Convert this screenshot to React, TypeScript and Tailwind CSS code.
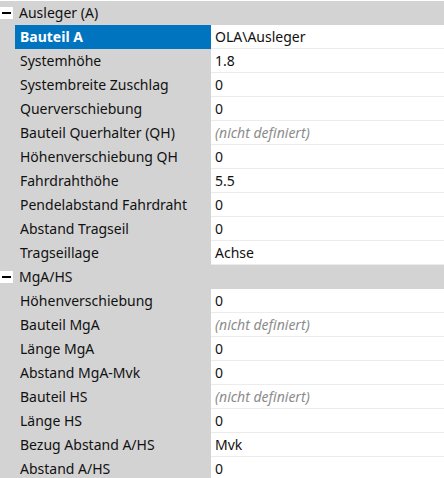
import React from "react";

type Row =
  | { kind: "group"; title: string }
  | { kind: "prop"; label: string; value: string; selected?: boolean; empty?: boolean };

const rows: Row[] = [
  { kind: "group", title: "Ausleger (A)" },
  { kind: "prop", label: "Bauteil A", value: "OLA\\Ausleger", selected: true },
  { kind: "prop", label: "Systemhöhe", value: "1.8" },
  { kind: "prop", label: "Systembreite Zuschlag", value: "0" },
  { kind: "prop", label: "Querverschiebung", value: "0" },
  { kind: "prop", label: "Bauteil Querhalter (QH)", value: "(nicht definiert)", empty: true },
  { kind: "prop", label: "Höhenverschiebung QH", value: "0" },
  { kind: "prop", label: "Fahrdrahthöhe", value: "5.5" },
  { kind: "prop", label: "Pendelabstand Fahrdraht", value: "0" },
  { kind: "prop", label: "Abstand Tragseil", value: "0" },
  { kind: "prop", label: "Tragseillage", value: "Achse" },
  { kind: "group", title: "MgA/HS" },
  { kind: "prop", label: "Höhenverschiebung", value: "0" },
  { kind: "prop", label: "Bauteil MgA", value: "(nicht definiert)", empty: true },
  { kind: "prop", label: "Länge MgA", value: "0" },
  { kind: "prop", label: "Abstand MgA-Mvk", value: "0" },
  { kind: "prop", label: "Bauteil HS", value: "(nicht definiert)", empty: true },
  { kind: "prop", label: "Länge HS", value: "0" },
  { kind: "prop", label: "Bezug Abstand A/HS", value: "Mvk" },
  { kind: "prop", label: "Abstand A/HS", value: "0" },
];

function GroupRow({ title }: { title: string }) {
  return (
    <div className="flex h-[24px] items-center bg-[#d3d3d3]">
      {/* collapse toggle */}
      <div className="w-[15px] h-full flex items-center">
        <div className="w-[13px] h-[12px] bg-white flex items-center justify-center">
          <div className="w-[9px] h-[2px] bg-black" />
        </div>
      </div>
      <span className="pl-[4px] text-[#111]">{title}</span>
    </div>
  );
}

function PropRow({ row }: { row: Extract<Row, { kind: "prop" }> }) {
  return (
    <div className="flex h-[24px] bg-[#d3d3d3]">
      <div className="w-[15px] shrink-0" />
      <div
        className={
          row.selected
            ? "w-[196px] shrink-0 flex items-center pl-[5px] bg-[#0074bf] text-white font-bold"
            : "w-[196px] shrink-0 flex items-center pl-[5px] text-[#111]"
        }
      >
        {row.label}
      </div>
      <div className="flex-1 flex items-center pl-[4px] bg-white border-b border-[#ececec]">
        {row.empty ? <span className="italic text-[#8c8c8c]">{row.value}</span> : <span className="text-[#111]">{row.value}</span>}
      </div>
    </div>
  );
}

export default function App() {
  return (
    <div className="w-[444px] h-[478px] overflow-hidden bg-white pt-[1px] text-[14px] leading-none font-['Segoe_UI','Noto_Sans',sans-serif]">
      {rows.map((r, i) =>
        r.kind === "group" ? <GroupRow key={i} title={r.title} /> : <PropRow key={i} row={r} />
      )}
    </div>
  );
}
